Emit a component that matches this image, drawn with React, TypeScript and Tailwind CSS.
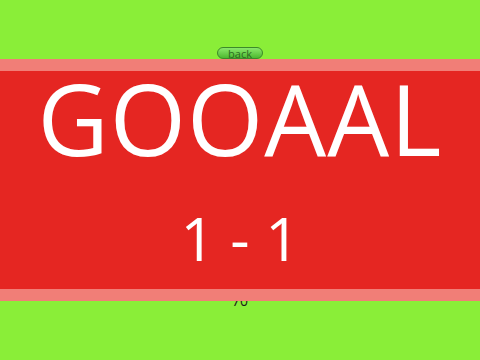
export default function App() {
  return (
    <div
      className="w-[480px] h-[360px] overflow-hidden bg-[#8aee38] flex flex-col items-center"
      style={{ fontFamily: '"Open Sans", sans-serif' }}
    >
      <button className="mt-[47px] w-[46px] h-[12px] rounded-full border border-[#3d8a2a] bg-gradient-to-b from-[#8ae86a] to-[#4cb92e] flex items-center justify-center text-[11px] leading-none text-[#2d6a22]">
        back
      </button>
      <div className="relative z-10 w-full h-[242px] border-y-[12px] border-[#f17e77] bg-[#e52622] flex flex-col items-center">
        <div className="mt-[-2px] text-[98px] leading-none tracking-[1px] text-white">GOOAAL</div>
        <div className="mt-[41px] text-[60px] leading-none text-white">1 - 1</div>
      </div>
      <div className="-mt-[7px] text-[14px] leading-none text-[#1a1a1a]">70</div>
    </div>
  );
}
